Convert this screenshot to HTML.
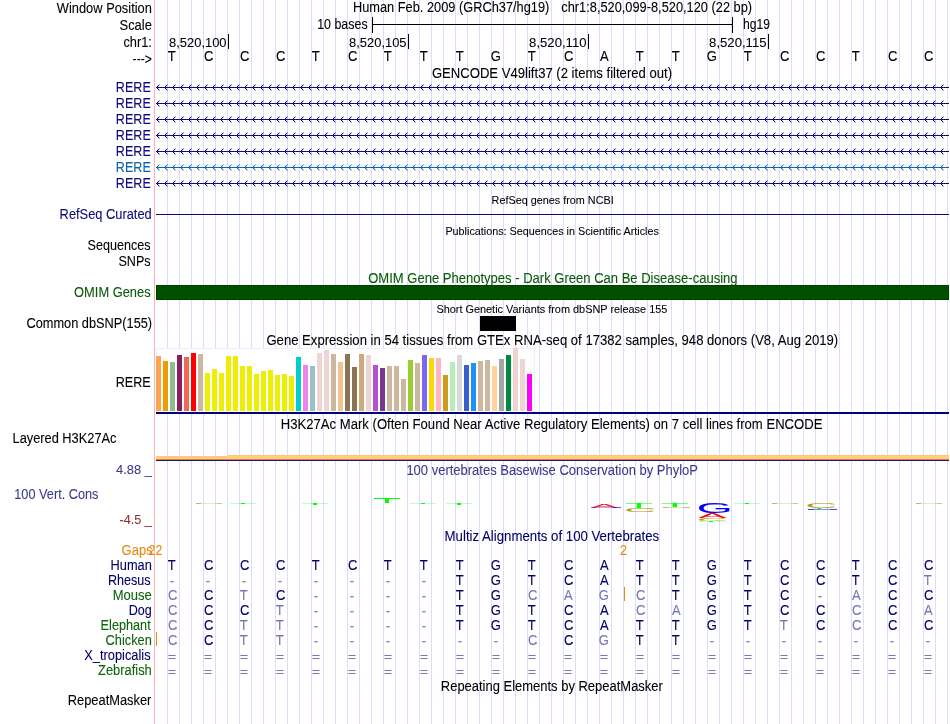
<!DOCTYPE html>
<html lang="en"><head><meta charset="utf-8"><title>UCSC Genome Browser - hg19 chr1:8,520,099-8,520,120</title>
<style>
html,body{margin:0;padding:0;background:#fff;}
body{width:950px;height:724px;overflow:hidden;}
svg{display:block;filter:grayscale(0);font-family:"Liberation Sans",Arial,Helvetica,sans-serif;}
text{white-space:pre;stroke-width:0.08px;}
.c{shape-rendering:crispEdges;}
</style></head><body>
<svg width="950" height="724" viewBox="0 0 950 724">
<rect width="950" height="724" fill="#fff"/>
<g class="c" fill="#dcdcff">
<rect x="167" y="0" width="1" height="724"/>
<rect x="179" y="0" width="1" height="724"/>
<rect x="191" y="0" width="1" height="724"/>
<rect x="203" y="0" width="1" height="724"/>
<rect x="215" y="0" width="1" height="724"/>
<rect x="227" y="0" width="1" height="724"/>
<rect x="239" y="0" width="1" height="724"/>
<rect x="251" y="0" width="1" height="724"/>
<rect x="263" y="0" width="1" height="724"/>
<rect x="275" y="0" width="1" height="724"/>
<rect x="287" y="0" width="1" height="724"/>
<rect x="299" y="0" width="1" height="724"/>
<rect x="311" y="0" width="1" height="724"/>
<rect x="323" y="0" width="1" height="724"/>
<rect x="335" y="0" width="1" height="724"/>
<rect x="347" y="0" width="1" height="724"/>
<rect x="359" y="0" width="1" height="724"/>
<rect x="371" y="0" width="1" height="724"/>
<rect x="383" y="0" width="1" height="724"/>
<rect x="395" y="0" width="1" height="724"/>
<rect x="407" y="0" width="1" height="724"/>
<rect x="419" y="0" width="1" height="724"/>
<rect x="431" y="0" width="1" height="724"/>
<rect x="443" y="0" width="1" height="724"/>
<rect x="455" y="0" width="1" height="724"/>
<rect x="467" y="0" width="1" height="724"/>
<rect x="479" y="0" width="1" height="724"/>
<rect x="491" y="0" width="1" height="724"/>
<rect x="503" y="0" width="1" height="724"/>
<rect x="515" y="0" width="1" height="724"/>
<rect x="527" y="0" width="1" height="724"/>
<rect x="539" y="0" width="1" height="724"/>
<rect x="551" y="0" width="1" height="724"/>
<rect x="563" y="0" width="1" height="724"/>
<rect x="575" y="0" width="1" height="724"/>
<rect x="587" y="0" width="1" height="724"/>
<rect x="599" y="0" width="1" height="724"/>
<rect x="611" y="0" width="1" height="724"/>
<rect x="623" y="0" width="1" height="724"/>
<rect x="635" y="0" width="1" height="724"/>
<rect x="647" y="0" width="1" height="724"/>
<rect x="659" y="0" width="1" height="724"/>
<rect x="671" y="0" width="1" height="724"/>
<rect x="683" y="0" width="1" height="724"/>
<rect x="695" y="0" width="1" height="724"/>
<rect x="707" y="0" width="1" height="724"/>
<rect x="719" y="0" width="1" height="724"/>
<rect x="731" y="0" width="1" height="724"/>
<rect x="743" y="0" width="1" height="724"/>
<rect x="755" y="0" width="1" height="724"/>
<rect x="767" y="0" width="1" height="724"/>
<rect x="779" y="0" width="1" height="724"/>
<rect x="791" y="0" width="1" height="724"/>
<rect x="803" y="0" width="1" height="724"/>
<rect x="815" y="0" width="1" height="724"/>
<rect x="827" y="0" width="1" height="724"/>
<rect x="839" y="0" width="1" height="724"/>
<rect x="851" y="0" width="1" height="724"/>
<rect x="863" y="0" width="1" height="724"/>
<rect x="875" y="0" width="1" height="724"/>
<rect x="887" y="0" width="1" height="724"/>
<rect x="899" y="0" width="1" height="724"/>
<rect x="911" y="0" width="1" height="724"/>
<rect x="923" y="0" width="1" height="724"/>
<rect x="935" y="0" width="1" height="724"/>
<rect x="947" y="0" width="1" height="724"/>
</g>
<rect class="c" x="154" y="0" width="1" height="724" fill="#ffb4b4"/>
<text transform="translate(56.80,13.00) scale(0.9899,1.06)" font-size="13" fill="#000" stroke="#000">Window Position</text>
<text transform="translate(119.50,30.00) scale(0.9972,1.06)" font-size="13" fill="#000" stroke="#000">Scale</text>
<text transform="translate(123.40,47.00) scale(0.9862,1.06)" font-size="13" fill="#000" stroke="#000">chr1:</text>
<text transform="translate(132.60,64.00) scale(0.9356,1.06)" font-size="13" fill="#000" stroke="#000">---&gt;</text>
<text transform="translate(352.91,12.00) scale(0.9853,1.06)" font-size="13" fill="#000" stroke="#000">Human Feb. 2009 (GRCh37/hg19)</text>
<text transform="translate(561.30,12.00) scale(0.9857,1.06)" font-size="13" fill="#000" stroke="#000">chr1:8,520,099-8,520,120 (22 bp)</text>
<g class="c" fill="#000">
<rect x="372" y="24" width="361" height="1"/>
<rect x="372" y="17" width="1" height="16"/>
<rect x="732" y="17" width="1" height="16"/>
<rect x="228" y="34" width="1" height="15"/>
<rect x="408" y="34" width="1" height="15"/>
<rect x="588" y="34" width="1" height="15"/>
<rect x="768" y="34" width="1" height="15"/>
</g>
<text transform="translate(317.20,29.00) scale(0.9557,1.06)" font-size="13" fill="#000" stroke="#000">10 bases</text>
<text transform="translate(742.90,29.00) scale(0.9341,1.06)" font-size="13" fill="#000" stroke="#000">hg19</text>
<text transform="translate(169.10,47.00) scale(0.9930,0.97)" font-size="13" fill="#000" stroke="#000">8,520,100</text>
<text transform="translate(349.10,47.00) scale(0.9930,0.97)" font-size="13" fill="#000" stroke="#000">8,520,105</text>
<text transform="translate(529.10,47.00) scale(1.0099,0.97)" font-size="13" fill="#000" stroke="#000">8,520,110</text>
<text transform="translate(709.10,47.00) scale(1.0099,0.97)" font-size="13" fill="#000" stroke="#000">8,520,115</text>
<text transform="translate(167.83,61.00) scale(1.0000,1.06)" font-size="13" fill="#000" stroke="#000">T</text>
<text transform="translate(203.91,61.00) scale(1.0000,1.06)" font-size="13" fill="#000" stroke="#000">C</text>
<text transform="translate(239.91,61.00) scale(1.0000,1.06)" font-size="13" fill="#000" stroke="#000">C</text>
<text transform="translate(275.91,61.00) scale(1.0000,1.06)" font-size="13" fill="#000" stroke="#000">C</text>
<text transform="translate(311.83,61.00) scale(1.0000,1.06)" font-size="13" fill="#000" stroke="#000">T</text>
<text transform="translate(347.91,61.00) scale(1.0000,1.06)" font-size="13" fill="#000" stroke="#000">C</text>
<text transform="translate(383.83,61.00) scale(1.0000,1.06)" font-size="13" fill="#000" stroke="#000">T</text>
<text transform="translate(419.83,61.00) scale(1.0000,1.06)" font-size="13" fill="#000" stroke="#000">T</text>
<text transform="translate(455.83,61.00) scale(1.0000,1.06)" font-size="13" fill="#000" stroke="#000">T</text>
<text transform="translate(490.84,61.00) scale(1.0000,1.06)" font-size="13" fill="#000" stroke="#000">G</text>
<text transform="translate(527.83,61.00) scale(1.0000,1.06)" font-size="13" fill="#000" stroke="#000">T</text>
<text transform="translate(563.91,61.00) scale(1.0000,1.06)" font-size="13" fill="#000" stroke="#000">C</text>
<text transform="translate(600.06,61.00) scale(1.0000,1.06)" font-size="13" fill="#000" stroke="#000">A</text>
<text transform="translate(635.83,61.00) scale(1.0000,1.06)" font-size="13" fill="#000" stroke="#000">T</text>
<text transform="translate(671.83,61.00) scale(1.0000,1.06)" font-size="13" fill="#000" stroke="#000">T</text>
<text transform="translate(706.84,61.00) scale(1.0000,1.06)" font-size="13" fill="#000" stroke="#000">G</text>
<text transform="translate(743.83,61.00) scale(1.0000,1.06)" font-size="13" fill="#000" stroke="#000">T</text>
<text transform="translate(779.91,61.00) scale(1.0000,1.06)" font-size="13" fill="#000" stroke="#000">C</text>
<text transform="translate(815.91,61.00) scale(1.0000,1.06)" font-size="13" fill="#000" stroke="#000">C</text>
<text transform="translate(851.83,61.00) scale(1.0000,1.06)" font-size="13" fill="#000" stroke="#000">T</text>
<text transform="translate(887.91,61.00) scale(1.0000,1.06)" font-size="13" fill="#000" stroke="#000">C</text>
<text transform="translate(923.91,61.00) scale(1.0000,1.06)" font-size="13" fill="#000" stroke="#000">C</text>
<defs>
<pattern id="cv0" x="157" y="84" width="8" height="16" patternUnits="userSpaceOnUse"><g class="c" fill="#0c0c78">
<rect x="0" y="2" width="1" height="1" opacity="1"/>
<rect x="0" y="4" width="1" height="1" opacity="1"/>
<rect x="1" y="1" width="1" height="1" opacity="0.9"/>
<rect x="1" y="5" width="1" height="1" opacity="0.9"/>
<rect x="2" y="0" width="1" height="1" opacity="0.4"/>
<rect x="2" y="6" width="1" height="1" opacity="0.4"/>
<rect x="1" y="2" width="1" height="1" opacity="0.2"/>
<rect x="1" y="4" width="1" height="1" opacity="0.2"/>
<rect x="0" y="1" width="1" height="1" opacity="0.15"/>
<rect x="0" y="5" width="1" height="1" opacity="0.15"/>
<rect x="2" y="1" width="1" height="1" opacity="0.15"/>
<rect x="2" y="5" width="1" height="1" opacity="0.15"/>
</g></pattern>
<pattern id="cv1" x="157" y="84" width="8" height="16" patternUnits="userSpaceOnUse"><g class="c" fill="#0c64aa">
<rect x="0" y="2" width="1" height="1" opacity="1"/>
<rect x="0" y="4" width="1" height="1" opacity="1"/>
<rect x="1" y="1" width="1" height="1" opacity="0.9"/>
<rect x="1" y="5" width="1" height="1" opacity="0.9"/>
<rect x="2" y="0" width="1" height="1" opacity="0.4"/>
<rect x="2" y="6" width="1" height="1" opacity="0.4"/>
<rect x="1" y="2" width="1" height="1" opacity="0.2"/>
<rect x="1" y="4" width="1" height="1" opacity="0.2"/>
<rect x="0" y="1" width="1" height="1" opacity="0.15"/>
<rect x="0" y="5" width="1" height="1" opacity="0.15"/>
<rect x="2" y="1" width="1" height="1" opacity="0.15"/>
<rect x="2" y="5" width="1" height="1" opacity="0.15"/>
</g></pattern>
</defs>
<text transform="translate(431.90,78.00) scale(1.0076,1.06)" font-size="13" fill="#000" stroke="#000">GENCODE V49lift37 (2 items filtered out)</text>
<text transform="translate(115.83,92.00) scale(0.9676,1.06)" font-size="13" fill="#0c0c78" stroke="#0c0c78">RERE</text>
<rect class="c" x="156" y="87" width="793" height="1" fill="#0c0c78"/>
<rect x="157" y="84" width="787" height="7" fill="url(#cv0)"/>
<text transform="translate(115.83,108.00) scale(0.9676,1.06)" font-size="13" fill="#0c0c78" stroke="#0c0c78">RERE</text>
<rect class="c" x="156" y="103" width="793" height="1" fill="#0c0c78"/>
<rect x="157" y="100" width="787" height="7" fill="url(#cv0)"/>
<text transform="translate(115.83,124.00) scale(0.9676,1.06)" font-size="13" fill="#0c0c78" stroke="#0c0c78">RERE</text>
<rect class="c" x="156" y="119" width="793" height="1" fill="#0c0c78"/>
<rect x="157" y="116" width="787" height="7" fill="url(#cv0)"/>
<text transform="translate(115.83,140.00) scale(0.9676,1.06)" font-size="13" fill="#0c0c78" stroke="#0c0c78">RERE</text>
<rect class="c" x="156" y="135" width="793" height="1" fill="#0c0c78"/>
<rect x="157" y="132" width="787" height="7" fill="url(#cv0)"/>
<text transform="translate(115.83,156.00) scale(0.9676,1.06)" font-size="13" fill="#0c0c78" stroke="#0c0c78">RERE</text>
<rect class="c" x="156" y="151" width="793" height="1" fill="#0c0c78"/>
<rect x="157" y="148" width="787" height="7" fill="url(#cv0)"/>
<text transform="translate(115.83,172.00) scale(0.9676,1.06)" font-size="13" fill="#0c64aa" stroke="#0c64aa">RERE</text>
<rect class="c" x="156" y="167" width="793" height="1" fill="#0c64aa"/>
<rect x="157" y="164" width="787" height="7" fill="url(#cv1)"/>
<text transform="translate(115.83,188.00) scale(0.9676,1.06)" font-size="13" fill="#0c0c78" stroke="#0c0c78">RERE</text>
<rect class="c" x="156" y="183" width="793" height="1" fill="#0c0c78"/>
<rect x="157" y="180" width="787" height="7" fill="url(#cv0)"/>
<text transform="translate(491.60,204.00) scale(0.9851,1.0)" font-size="11" fill="#000" stroke="#000">RefSeq genes from NCBI</text>
<text transform="translate(59.61,219.00) scale(0.9892,1.06)" font-size="13" fill="#0c0c78" stroke="#0c0c78">RefSeq Curated</text>
<rect class="c" x="156" y="214" width="793" height="1" fill="#0c0c78"/>
<text transform="translate(445.40,235.00) scale(0.9818,1.0)" font-size="11" fill="#000" stroke="#000">Publications: Sequences in Scientific Articles</text>
<text transform="translate(87.60,250.00) scale(0.9687,1.06)" font-size="13" fill="#000" stroke="#000">Sequences</text>
<text transform="translate(118.40,266.00) scale(0.9695,1.06)" font-size="13" fill="#000" stroke="#000">SNPs</text>
<text transform="translate(368.20,283.00) scale(1.0028,1.06)" font-size="13" fill="#0a5a0a" stroke="#0a5a0a">OMIM Gene Phenotypes - Dark Green Can Be Disease-causing</text>
<text transform="translate(74.10,297.00) scale(0.9898,1.06)" font-size="13" fill="#0a5a0a" stroke="#0a5a0a">OMIM Genes</text>
<rect class="c" x="156" y="285" width="793" height="15" fill="#004000"/>
<rect class="c" x="157" y="286" width="791" height="13" fill="#005000"/>
<text transform="translate(436.40,313.00) scale(0.9921,1.0)" font-size="11" fill="#000" stroke="#000">Short Genetic Variants from dbSNP release 155</text>
<text transform="translate(26.40,328.00) scale(0.9839,1.06)" font-size="13" fill="#000" stroke="#000">Common dbSNP(155)</text>
<rect class="c" x="480" y="316" width="36" height="15" fill="#000"/>
<text transform="translate(266.40,345.00) scale(1.0093,1.06)" font-size="13" fill="#000" stroke="#000">Gene Expression in 54 tissues from GTEx RNA-seq of 17382 samples, 948 donors (V8, Aug 2019)</text>
<text transform="translate(115.73,387.00) scale(0.9705,1.06)" font-size="13" fill="#000" stroke="#000">RERE</text>
<g class="c">
<rect x="156" y="348" width="379" height="64" fill="#fff"/>
<rect x="156" y="348" width="379" height="1" fill="#f0f0f0"/>
<rect x="534" y="348" width="1" height="64" fill="#f0f0f0"/>
<rect x="156" y="348" width="1" height="64" fill="#f0f0f0"/>
<rect x="156" y="356" width="5" height="55" fill="#FFA54F"/>
<rect x="163" y="361" width="5" height="50" fill="#EE9A00"/>
<rect x="170" y="362" width="5" height="49" fill="#8FBC8F"/>
<rect x="177" y="355" width="5" height="56" fill="#8B1C62"/>
<rect x="184" y="357" width="5" height="54" fill="#EE6A50"/>
<rect x="191" y="353" width="5" height="58" fill="#FF0000"/>
<rect x="198" y="354" width="5" height="57" fill="#CDB79E"/>
<rect x="205" y="373" width="5" height="38" fill="#EEEE00"/>
<rect x="212" y="369" width="5" height="42" fill="#EEEE00"/>
<rect x="219" y="373" width="5" height="38" fill="#EEEE00"/>
<rect x="226" y="356" width="5" height="55" fill="#EEEE00"/>
<rect x="233" y="356" width="5" height="55" fill="#EEEE00"/>
<rect x="240" y="366" width="5" height="45" fill="#EEEE00"/>
<rect x="247" y="366" width="5" height="45" fill="#EEEE00"/>
<rect x="254" y="374" width="5" height="37" fill="#EEEE00"/>
<rect x="261" y="371" width="5" height="40" fill="#EEEE00"/>
<rect x="268" y="370" width="5" height="41" fill="#EEEE00"/>
<rect x="275" y="375" width="5" height="36" fill="#EEEE00"/>
<rect x="282" y="374" width="5" height="37" fill="#EEEE00"/>
<rect x="289" y="376" width="5" height="35" fill="#EEEE00"/>
<rect x="296" y="357" width="5" height="54" fill="#00CDCD"/>
<rect x="303" y="365" width="5" height="46" fill="#EE82EE"/>
<rect x="310" y="366" width="5" height="45" fill="#9AC0CD"/>
<rect x="317" y="353" width="5" height="58" fill="#EED5D2"/>
<rect x="324" y="350" width="5" height="61" fill="#EED5D2"/>
<rect x="331" y="354" width="5" height="57" fill="#CDB79E"/>
<rect x="338" y="362" width="5" height="49" fill="#EEC591"/>
<rect x="345" y="354" width="5" height="57" fill="#8B7355"/>
<rect x="352" y="367" width="5" height="44" fill="#8B7355"/>
<rect x="359" y="354" width="5" height="57" fill="#CDAA7D"/>
<rect x="366" y="355" width="5" height="56" fill="#EED5D2"/>
<rect x="373" y="365" width="5" height="46" fill="#B452CD"/>
<rect x="380" y="368" width="5" height="43" fill="#7A378B"/>
<rect x="387" y="366" width="5" height="45" fill="#CDB79E"/>
<rect x="394" y="366" width="5" height="45" fill="#CDB79E"/>
<rect x="401" y="379" width="5" height="32" fill="#CDB79E"/>
<rect x="408" y="360" width="5" height="51" fill="#9ACD32"/>
<rect x="415" y="363" width="5" height="48" fill="#CDB79E"/>
<rect x="422" y="355" width="5" height="56" fill="#7A67EE"/>
<rect x="429" y="358" width="5" height="53" fill="#FFD700"/>
<rect x="436" y="358" width="5" height="53" fill="#FFB6C1"/>
<rect x="443" y="375" width="5" height="36" fill="#CD9B1D"/>
<rect x="450" y="362" width="5" height="49" fill="#B4EEB4"/>
<rect x="457" y="355" width="5" height="56" fill="#D9D9D9"/>
<rect x="464" y="365" width="5" height="46" fill="#3A5FCD"/>
<rect x="471" y="363" width="5" height="48" fill="#1E90FF"/>
<rect x="478" y="361" width="5" height="50" fill="#CDB79E"/>
<rect x="485" y="360" width="5" height="51" fill="#CDB79E"/>
<rect x="492" y="366" width="5" height="45" fill="#FFD39B"/>
<rect x="499" y="359" width="5" height="52" fill="#A6A6A6"/>
<rect x="506" y="355" width="5" height="56" fill="#008B45"/>
<rect x="513" y="348" width="5" height="63" fill="#EED5D2"/>
<rect x="520" y="359" width="5" height="52" fill="#EED5D2"/>
<rect x="527" y="374" width="5" height="37" fill="#FF00FF"/>
<rect x="156" y="412" width="793" height="2" fill="#00007a"/>
</g>
<text transform="translate(280.79,429.00) scale(1.0086,1.06)" font-size="13" fill="#000" stroke="#000">H3K27Ac Mark (Often Found Near Active Regulatory Elements) on 7 cell lines from ENCODE</text>
<text transform="translate(12.51,443.00) scale(0.9866,1.06)" font-size="13" fill="#000" stroke="#000">Layered H3K27Ac</text>
<g class="c">
<rect x="156" y="456" width="793" height="3" fill="#fdd27a"/>
<rect x="228" y="455" width="721" height="1" fill="#fccb6c"/>
<rect x="156" y="456" width="72" height="1" fill="#fccb6c"/>
<rect x="156" y="459" width="793" height="1" fill="#f8706a"/>
<rect x="156" y="460" width="793" height="1" fill="#18185a"/>
</g>
<text transform="translate(406.40,475.00) scale(1.0005,1.06)" font-size="13" fill="#3c3c8c" stroke="#3c3c8c">100 vertebrates Basewise Conservation by PhyloP</text>
<text transform="translate(116.10,474.00) scale(0.9915,0.97)" font-size="13" fill="#3c3c8c" stroke="#3c3c8c">4.88 _</text>
<text transform="translate(14.30,499.00) scale(0.9792,1.06)" font-size="13" fill="#3c3c8c" stroke="#3c3c8c">100 Vert. Cons</text>
<text transform="translate(119.50,524.00) scale(0.9761,0.97)" font-size="13" fill="#8c3030" stroke="#8c3030">-4.5 _</text>
<rect class="c" x="196" y="503" width="26" height="1" fill="#a8a018" opacity="0.28"/>
<rect class="c" x="196" y="503" width="5" height="1" fill="#a8a018" opacity="0.6"/>
<rect class="c" x="217" y="503" width="5" height="1" fill="#a8a018" opacity="0.4"/>
<rect class="c" x="230" y="503" width="26" height="1" fill="#00ff00" opacity="0.25"/>
<rect class="c" x="241" y="503" width="4" height="1" fill="#00ff00"/>
<rect class="c" x="302" y="503" width="26" height="1" fill="#00ff00" opacity="0.25"/>
<rect class="c" x="313" y="503" width="4" height="2" fill="#00ff00"/>
<rect class="c" x="374" y="498" width="26" height="1" fill="#00ff00" opacity="1"/>
<rect class="c" x="385" y="498" width="4" height="5" fill="#00ff00"/>
<rect class="c" x="410" y="503" width="26" height="1" fill="#00ff00" opacity="0.25"/>
<rect class="c" x="421" y="503" width="4" height="1" fill="#00ff00"/>
<rect class="c" x="446" y="503" width="26" height="1" fill="#00ff00" opacity="0.25"/>
<rect class="c" x="457" y="503" width="4" height="2" fill="#00ff00"/>
<rect class="c" x="734" y="503" width="26" height="1" fill="#00ff00" opacity="0.25"/>
<rect class="c" x="745" y="503" width="4" height="1" fill="#00ff00"/>
<rect class="c" x="772" y="503" width="26" height="1" fill="#a8a018" opacity="0.28"/>
<rect class="c" x="772" y="503" width="5" height="1" fill="#a8a018" opacity="0.6"/>
<rect class="c" x="793" y="503" width="5" height="1" fill="#a8a018" opacity="0.4"/>
<rect class="c" x="916" y="503" width="26" height="1" fill="#a8a018" opacity="0.28"/>
<rect class="c" x="916" y="503" width="5" height="1" fill="#a8a018" opacity="0.6"/>
<rect class="c" x="937" y="503" width="5" height="1" fill="#a8a018" opacity="0.4"/>
<text transform="translate(590.60,507.50) scale(2.069,0.293)" font-size="20.0" fill="#ff0000" stroke="#ff0000" stroke-width="0" y="0">A</text>
<rect class="c" x="591" y="507" width="30" height="1" fill="#0000ff" opacity="0.3"/>
<rect class="c" x="614" y="507" width="7" height="1" fill="#0000ff" opacity="0.5"/>
<text transform="translate(625.09,507.60) scale(2.281,0.321)" font-size="20.0" fill="#00ff00" stroke="#00ff00" stroke-width="0" y="0">T</text>
<text transform="translate(624.18,507.60) scale(2.219,-0.224)" font-size="20.0" fill="#a8a018" stroke="#a8a018" stroke-width="0.5" y="0.24">C</text>
<text transform="translate(661.09,507.20) scale(2.281,0.293)" font-size="20.0" fill="#00ff00" stroke="#00ff00" stroke-width="0" y="0">T</text>
<rect class="c" x="663" y="507" width="27" height="1" fill="#a8a018" opacity="0.3"/>
<rect class="c" x="663" y="507" width="6" height="1" fill="#a8a018" opacity="0.6"/>
<rect class="c" x="684" y="507" width="6" height="1" fill="#a8a018" opacity="0.5"/>
<text transform="translate(696.69,513.10) scale(2.309,0.705)" font-size="20.0" fill="#0000ff" stroke="#0000ff" stroke-width="0" y="-0.24">G</text>
<text transform="translate(698.20,518.20) scale(2.114,0.363)" font-size="20.0" fill="#ff0000" stroke="#ff0000" stroke-width="0" y="0">A</text>
<text transform="translate(696.83,518.30) scale(2.172,-0.190)" font-size="20.0" fill="#a8a018" stroke="#a8a018" stroke-width="0.4" y="0.24">C</text>
<rect class="c" x="698" y="521" width="29" height="1" fill="#00ff00" opacity="0.2"/>
<rect class="c" x="709" y="521" width="4" height="1" fill="#00ff00"/>
<text transform="translate(805.18,508.00) scale(2.219,0.386)" font-size="20.0" fill="#a8a018" stroke="#a8a018" stroke-width="0.5" y="-0.24">C</text>
<rect class="c" x="817" y="508" width="4" height="1" fill="#00ff00"/>
<rect class="c" x="806" y="508" width="30" height="1" fill="#00ff00" opacity="0.12"/>
<rect class="c" x="808" y="509" width="29" height="1" fill="#0000ff" opacity="0.45"/>
<rect class="c" x="808" y="509" width="6" height="1" fill="#0000ff" opacity="0.5"/>
<rect class="c" x="830" y="509" width="7" height="1" fill="#0000ff" opacity="0.5"/>
<text transform="translate(444.58,541.00) scale(1.0170,1.06)" font-size="13" fill="#000066" stroke="#000066">Multiz Alignments of 100 Vertebrates</text>
<text transform="translate(121.60,555.00) scale(1.0000,1.06)" font-size="13" fill="#e68a14" stroke="#e68a14">Gaps</text>
<text transform="translate(148.60,555.00) scale(0.9417,1.06)" font-size="13" fill="#e68a14" stroke="#e68a14">22</text>
<text transform="translate(620.00,555.00) scale(0.9714,1.06)" font-size="13" fill="#e68a14" stroke="#e68a14">2</text>
<text transform="translate(110.51,570.00) scale(0.9858,1.06)" font-size="13" fill="#000066" stroke="#000066">Human</text>
<text transform="translate(167.83,570.00) scale(1.0000,1.06)" font-size="13" fill="#000066" stroke="#000066">T</text>
<text transform="translate(203.91,570.00) scale(1.0000,1.06)" font-size="13" fill="#000066" stroke="#000066">C</text>
<text transform="translate(239.91,570.00) scale(1.0000,1.06)" font-size="13" fill="#000066" stroke="#000066">C</text>
<text transform="translate(275.91,570.00) scale(1.0000,1.06)" font-size="13" fill="#000066" stroke="#000066">C</text>
<text transform="translate(311.83,570.00) scale(1.0000,1.06)" font-size="13" fill="#000066" stroke="#000066">T</text>
<text transform="translate(347.91,570.00) scale(1.0000,1.06)" font-size="13" fill="#000066" stroke="#000066">C</text>
<text transform="translate(383.83,570.00) scale(1.0000,1.06)" font-size="13" fill="#000066" stroke="#000066">T</text>
<text transform="translate(419.83,570.00) scale(1.0000,1.06)" font-size="13" fill="#000066" stroke="#000066">T</text>
<text transform="translate(455.83,570.00) scale(1.0000,1.06)" font-size="13" fill="#000066" stroke="#000066">T</text>
<text transform="translate(490.84,570.00) scale(1.0000,1.06)" font-size="13" fill="#000066" stroke="#000066">G</text>
<text transform="translate(527.83,570.00) scale(1.0000,1.06)" font-size="13" fill="#000066" stroke="#000066">T</text>
<text transform="translate(563.91,570.00) scale(1.0000,1.06)" font-size="13" fill="#000066" stroke="#000066">C</text>
<text transform="translate(600.06,570.00) scale(1.0000,1.06)" font-size="13" fill="#000066" stroke="#000066">A</text>
<text transform="translate(635.83,570.00) scale(1.0000,1.06)" font-size="13" fill="#000066" stroke="#000066">T</text>
<text transform="translate(671.83,570.00) scale(1.0000,1.06)" font-size="13" fill="#000066" stroke="#000066">T</text>
<text transform="translate(706.84,570.00) scale(1.0000,1.06)" font-size="13" fill="#000066" stroke="#000066">G</text>
<text transform="translate(743.83,570.00) scale(1.0000,1.06)" font-size="13" fill="#000066" stroke="#000066">T</text>
<text transform="translate(779.91,570.00) scale(1.0000,1.06)" font-size="13" fill="#000066" stroke="#000066">C</text>
<text transform="translate(815.91,570.00) scale(1.0000,1.06)" font-size="13" fill="#000066" stroke="#000066">C</text>
<text transform="translate(851.83,570.00) scale(1.0000,1.06)" font-size="13" fill="#000066" stroke="#000066">T</text>
<text transform="translate(887.91,570.00) scale(1.0000,1.06)" font-size="13" fill="#000066" stroke="#000066">C</text>
<text transform="translate(923.91,570.00) scale(1.0000,1.06)" font-size="13" fill="#000066" stroke="#000066">C</text>
<text transform="translate(108.03,585.00) scale(0.9661,1.06)" font-size="13" fill="#000066" stroke="#000066">Rhesus</text>
<text transform="translate(169.79,585.00) scale(1.0000,1.0)" font-size="13" fill="#7878b0" stroke="#7878b0">-</text>
<text transform="translate(205.79,585.00) scale(1.0000,1.0)" font-size="13" fill="#7878b0" stroke="#7878b0">-</text>
<text transform="translate(241.79,585.00) scale(1.0000,1.0)" font-size="13" fill="#7878b0" stroke="#7878b0">-</text>
<text transform="translate(277.79,585.00) scale(1.0000,1.0)" font-size="13" fill="#7878b0" stroke="#7878b0">-</text>
<text transform="translate(313.79,585.00) scale(1.0000,1.0)" font-size="13" fill="#7878b0" stroke="#7878b0">-</text>
<text transform="translate(349.79,585.00) scale(1.0000,1.0)" font-size="13" fill="#7878b0" stroke="#7878b0">-</text>
<text transform="translate(385.79,585.00) scale(1.0000,1.0)" font-size="13" fill="#7878b0" stroke="#7878b0">-</text>
<text transform="translate(421.79,585.00) scale(1.0000,1.0)" font-size="13" fill="#7878b0" stroke="#7878b0">-</text>
<text transform="translate(455.83,585.00) scale(1.0000,1.06)" font-size="13" fill="#000066" stroke="#000066">T</text>
<text transform="translate(490.84,585.00) scale(1.0000,1.06)" font-size="13" fill="#000066" stroke="#000066">G</text>
<text transform="translate(527.83,585.00) scale(1.0000,1.06)" font-size="13" fill="#000066" stroke="#000066">T</text>
<text transform="translate(563.91,585.00) scale(1.0000,1.06)" font-size="13" fill="#000066" stroke="#000066">C</text>
<text transform="translate(600.06,585.00) scale(1.0000,1.06)" font-size="13" fill="#000066" stroke="#000066">A</text>
<text transform="translate(635.83,585.00) scale(1.0000,1.06)" font-size="13" fill="#000066" stroke="#000066">T</text>
<text transform="translate(671.83,585.00) scale(1.0000,1.06)" font-size="13" fill="#000066" stroke="#000066">T</text>
<text transform="translate(706.84,585.00) scale(1.0000,1.06)" font-size="13" fill="#000066" stroke="#000066">G</text>
<text transform="translate(743.83,585.00) scale(1.0000,1.06)" font-size="13" fill="#000066" stroke="#000066">T</text>
<text transform="translate(779.91,585.00) scale(1.0000,1.06)" font-size="13" fill="#000066" stroke="#000066">C</text>
<text transform="translate(815.91,585.00) scale(1.0000,1.06)" font-size="13" fill="#000066" stroke="#000066">C</text>
<text transform="translate(851.83,585.00) scale(1.0000,1.06)" font-size="13" fill="#000066" stroke="#000066">T</text>
<text transform="translate(887.91,585.00) scale(1.0000,1.06)" font-size="13" fill="#000066" stroke="#000066">C</text>
<text transform="translate(923.83,585.00) scale(1.0000,1.06)" font-size="13" fill="#7878b0" stroke="#7878b0">T</text>
<text transform="translate(112.70,600.00) scale(1.0029,1.06)" font-size="13" fill="#0c640c" stroke="#0c640c">Mouse</text>
<text transform="translate(167.91,600.00) scale(1.0000,1.06)" font-size="13" fill="#7878b0" stroke="#7878b0">C</text>
<text transform="translate(203.91,600.00) scale(1.0000,1.06)" font-size="13" fill="#000066" stroke="#000066">C</text>
<text transform="translate(239.83,600.00) scale(1.0000,1.06)" font-size="13" fill="#7878b0" stroke="#7878b0">T</text>
<text transform="translate(275.91,600.00) scale(1.0000,1.06)" font-size="13" fill="#000066" stroke="#000066">C</text>
<text transform="translate(313.79,600.00) scale(1.0000,1.0)" font-size="13" fill="#7878b0" stroke="#7878b0">-</text>
<text transform="translate(349.79,600.00) scale(1.0000,1.0)" font-size="13" fill="#7878b0" stroke="#7878b0">-</text>
<text transform="translate(385.79,600.00) scale(1.0000,1.0)" font-size="13" fill="#7878b0" stroke="#7878b0">-</text>
<text transform="translate(421.79,600.00) scale(1.0000,1.0)" font-size="13" fill="#7878b0" stroke="#7878b0">-</text>
<text transform="translate(455.83,600.00) scale(1.0000,1.06)" font-size="13" fill="#000066" stroke="#000066">T</text>
<text transform="translate(490.84,600.00) scale(1.0000,1.06)" font-size="13" fill="#000066" stroke="#000066">G</text>
<text transform="translate(527.91,600.00) scale(1.0000,1.06)" font-size="13" fill="#7878b0" stroke="#7878b0">C</text>
<text transform="translate(564.06,600.00) scale(1.0000,1.06)" font-size="13" fill="#7878b0" stroke="#7878b0">A</text>
<text transform="translate(598.84,600.00) scale(1.0000,1.06)" font-size="13" fill="#7878b0" stroke="#7878b0">G</text>
<text transform="translate(635.91,600.00) scale(1.0000,1.06)" font-size="13" fill="#7878b0" stroke="#7878b0">C</text>
<text transform="translate(671.83,600.00) scale(1.0000,1.06)" font-size="13" fill="#000066" stroke="#000066">T</text>
<text transform="translate(706.84,600.00) scale(1.0000,1.06)" font-size="13" fill="#000066" stroke="#000066">G</text>
<text transform="translate(743.83,600.00) scale(1.0000,1.06)" font-size="13" fill="#000066" stroke="#000066">T</text>
<text transform="translate(779.91,600.00) scale(1.0000,1.06)" font-size="13" fill="#000066" stroke="#000066">C</text>
<text transform="translate(817.79,600.00) scale(1.0000,1.0)" font-size="13" fill="#7878b0" stroke="#7878b0">-</text>
<text transform="translate(852.06,600.00) scale(1.0000,1.06)" font-size="13" fill="#7878b0" stroke="#7878b0">A</text>
<text transform="translate(887.91,600.00) scale(1.0000,1.06)" font-size="13" fill="#000066" stroke="#000066">C</text>
<text transform="translate(923.91,600.00) scale(1.0000,1.06)" font-size="13" fill="#000066" stroke="#000066">C</text>
<text transform="translate(128.73,615.00) scale(0.9682,1.06)" font-size="13" fill="#000066" stroke="#000066">Dog</text>
<text transform="translate(167.91,615.00) scale(1.0000,1.06)" font-size="13" fill="#7878b0" stroke="#7878b0">C</text>
<text transform="translate(203.91,615.00) scale(1.0000,1.06)" font-size="13" fill="#000066" stroke="#000066">C</text>
<text transform="translate(239.91,615.00) scale(1.0000,1.06)" font-size="13" fill="#000066" stroke="#000066">C</text>
<text transform="translate(275.83,615.00) scale(1.0000,1.06)" font-size="13" fill="#7878b0" stroke="#7878b0">T</text>
<text transform="translate(313.79,615.00) scale(1.0000,1.0)" font-size="13" fill="#7878b0" stroke="#7878b0">-</text>
<text transform="translate(349.79,615.00) scale(1.0000,1.0)" font-size="13" fill="#7878b0" stroke="#7878b0">-</text>
<text transform="translate(385.79,615.00) scale(1.0000,1.0)" font-size="13" fill="#7878b0" stroke="#7878b0">-</text>
<text transform="translate(421.79,615.00) scale(1.0000,1.0)" font-size="13" fill="#7878b0" stroke="#7878b0">-</text>
<text transform="translate(455.83,615.00) scale(1.0000,1.06)" font-size="13" fill="#000066" stroke="#000066">T</text>
<text transform="translate(490.84,615.00) scale(1.0000,1.06)" font-size="13" fill="#000066" stroke="#000066">G</text>
<text transform="translate(527.83,615.00) scale(1.0000,1.06)" font-size="13" fill="#000066" stroke="#000066">T</text>
<text transform="translate(563.91,615.00) scale(1.0000,1.06)" font-size="13" fill="#000066" stroke="#000066">C</text>
<text transform="translate(600.06,615.00) scale(1.0000,1.06)" font-size="13" fill="#000066" stroke="#000066">A</text>
<text transform="translate(635.91,615.00) scale(1.0000,1.06)" font-size="13" fill="#7878b0" stroke="#7878b0">C</text>
<text transform="translate(672.06,615.00) scale(1.0000,1.06)" font-size="13" fill="#7878b0" stroke="#7878b0">A</text>
<text transform="translate(706.84,615.00) scale(1.0000,1.06)" font-size="13" fill="#000066" stroke="#000066">G</text>
<text transform="translate(743.83,615.00) scale(1.0000,1.06)" font-size="13" fill="#000066" stroke="#000066">T</text>
<text transform="translate(779.91,615.00) scale(1.0000,1.06)" font-size="13" fill="#000066" stroke="#000066">C</text>
<text transform="translate(815.91,615.00) scale(1.0000,1.06)" font-size="13" fill="#000066" stroke="#000066">C</text>
<text transform="translate(851.91,615.00) scale(1.0000,1.06)" font-size="13" fill="#7878b0" stroke="#7878b0">C</text>
<text transform="translate(887.91,615.00) scale(1.0000,1.06)" font-size="13" fill="#000066" stroke="#000066">C</text>
<text transform="translate(924.06,615.00) scale(1.0000,1.06)" font-size="13" fill="#7878b0" stroke="#7878b0">A</text>
<text transform="translate(100.62,630.00) scale(0.9762,1.06)" font-size="13" fill="#0c640c" stroke="#0c640c">Elephant</text>
<text transform="translate(167.91,630.00) scale(1.0000,1.06)" font-size="13" fill="#7878b0" stroke="#7878b0">C</text>
<text transform="translate(203.91,630.00) scale(1.0000,1.06)" font-size="13" fill="#000066" stroke="#000066">C</text>
<text transform="translate(239.83,630.00) scale(1.0000,1.06)" font-size="13" fill="#7878b0" stroke="#7878b0">T</text>
<text transform="translate(275.83,630.00) scale(1.0000,1.06)" font-size="13" fill="#7878b0" stroke="#7878b0">T</text>
<text transform="translate(313.79,630.00) scale(1.0000,1.0)" font-size="13" fill="#7878b0" stroke="#7878b0">-</text>
<text transform="translate(349.79,630.00) scale(1.0000,1.0)" font-size="13" fill="#7878b0" stroke="#7878b0">-</text>
<text transform="translate(385.79,630.00) scale(1.0000,1.0)" font-size="13" fill="#7878b0" stroke="#7878b0">-</text>
<text transform="translate(421.79,630.00) scale(1.0000,1.0)" font-size="13" fill="#7878b0" stroke="#7878b0">-</text>
<text transform="translate(455.83,630.00) scale(1.0000,1.06)" font-size="13" fill="#000066" stroke="#000066">T</text>
<text transform="translate(490.84,630.00) scale(1.0000,1.06)" font-size="13" fill="#000066" stroke="#000066">G</text>
<text transform="translate(527.83,630.00) scale(1.0000,1.06)" font-size="13" fill="#000066" stroke="#000066">T</text>
<text transform="translate(563.91,630.00) scale(1.0000,1.06)" font-size="13" fill="#000066" stroke="#000066">C</text>
<text transform="translate(600.06,630.00) scale(1.0000,1.06)" font-size="13" fill="#000066" stroke="#000066">A</text>
<text transform="translate(635.83,630.00) scale(1.0000,1.06)" font-size="13" fill="#000066" stroke="#000066">T</text>
<text transform="translate(671.83,630.00) scale(1.0000,1.06)" font-size="13" fill="#000066" stroke="#000066">T</text>
<text transform="translate(706.84,630.00) scale(1.0000,1.06)" font-size="13" fill="#000066" stroke="#000066">G</text>
<text transform="translate(743.83,630.00) scale(1.0000,1.06)" font-size="13" fill="#000066" stroke="#000066">T</text>
<text transform="translate(779.83,630.00) scale(1.0000,1.06)" font-size="13" fill="#7878b0" stroke="#7878b0">T</text>
<text transform="translate(815.91,630.00) scale(1.0000,1.06)" font-size="13" fill="#000066" stroke="#000066">C</text>
<text transform="translate(851.91,630.00) scale(1.0000,1.06)" font-size="13" fill="#7878b0" stroke="#7878b0">C</text>
<text transform="translate(887.91,630.00) scale(1.0000,1.06)" font-size="13" fill="#000066" stroke="#000066">C</text>
<text transform="translate(923.91,630.00) scale(1.0000,1.06)" font-size="13" fill="#000066" stroke="#000066">C</text>
<text transform="translate(105.60,645.00) scale(0.9842,1.06)" font-size="13" fill="#0c640c" stroke="#0c640c">Chicken</text>
<text transform="translate(167.91,645.00) scale(1.0000,1.06)" font-size="13" fill="#7878b0" stroke="#7878b0">C</text>
<text transform="translate(203.91,645.00) scale(1.0000,1.06)" font-size="13" fill="#000066" stroke="#000066">C</text>
<text transform="translate(239.83,645.00) scale(1.0000,1.06)" font-size="13" fill="#7878b0" stroke="#7878b0">T</text>
<text transform="translate(275.83,645.00) scale(1.0000,1.06)" font-size="13" fill="#7878b0" stroke="#7878b0">T</text>
<text transform="translate(313.79,645.00) scale(1.0000,1.0)" font-size="13" fill="#7878b0" stroke="#7878b0">-</text>
<text transform="translate(349.79,645.00) scale(1.0000,1.0)" font-size="13" fill="#7878b0" stroke="#7878b0">-</text>
<text transform="translate(385.79,645.00) scale(1.0000,1.0)" font-size="13" fill="#7878b0" stroke="#7878b0">-</text>
<text transform="translate(421.79,645.00) scale(1.0000,1.0)" font-size="13" fill="#7878b0" stroke="#7878b0">-</text>
<text transform="translate(457.79,645.00) scale(1.0000,1.0)" font-size="13" fill="#7878b0" stroke="#7878b0">-</text>
<text transform="translate(493.79,645.00) scale(1.0000,1.0)" font-size="13" fill="#7878b0" stroke="#7878b0">-</text>
<text transform="translate(527.91,645.00) scale(1.0000,1.06)" font-size="13" fill="#7878b0" stroke="#7878b0">C</text>
<text transform="translate(563.91,645.00) scale(1.0000,1.06)" font-size="13" fill="#000066" stroke="#000066">C</text>
<text transform="translate(598.84,645.00) scale(1.0000,1.06)" font-size="13" fill="#7878b0" stroke="#7878b0">G</text>
<text transform="translate(635.83,645.00) scale(1.0000,1.06)" font-size="13" fill="#000066" stroke="#000066">T</text>
<text transform="translate(671.83,645.00) scale(1.0000,1.06)" font-size="13" fill="#000066" stroke="#000066">T</text>
<text transform="translate(709.79,645.00) scale(1.0000,1.0)" font-size="13" fill="#7878b0" stroke="#7878b0">-</text>
<text transform="translate(745.79,645.00) scale(1.0000,1.0)" font-size="13" fill="#7878b0" stroke="#7878b0">-</text>
<text transform="translate(781.79,645.00) scale(1.0000,1.0)" font-size="13" fill="#7878b0" stroke="#7878b0">-</text>
<text transform="translate(817.79,645.00) scale(1.0000,1.0)" font-size="13" fill="#7878b0" stroke="#7878b0">-</text>
<text transform="translate(853.79,645.00) scale(1.0000,1.0)" font-size="13" fill="#7878b0" stroke="#7878b0">-</text>
<text transform="translate(889.79,645.00) scale(1.0000,1.0)" font-size="13" fill="#7878b0" stroke="#7878b0">-</text>
<text transform="translate(925.79,645.00) scale(1.0000,1.0)" font-size="13" fill="#7878b0" stroke="#7878b0">-</text>
<text transform="translate(84.20,660.00) scale(0.9882,1.06)" font-size="13" fill="#000066" stroke="#000066">X_tropicalis</text>
<text transform="translate(167.67,661.00) scale(1.1000,1.0)" font-size="13" fill="#7878b0" stroke="#7878b0">=</text>
<text transform="translate(203.67,661.00) scale(1.1000,1.0)" font-size="13" fill="#7878b0" stroke="#7878b0">=</text>
<text transform="translate(239.67,661.00) scale(1.1000,1.0)" font-size="13" fill="#7878b0" stroke="#7878b0">=</text>
<text transform="translate(275.67,661.00) scale(1.1000,1.0)" font-size="13" fill="#7878b0" stroke="#7878b0">=</text>
<text transform="translate(311.67,661.00) scale(1.1000,1.0)" font-size="13" fill="#7878b0" stroke="#7878b0">=</text>
<text transform="translate(347.67,661.00) scale(1.1000,1.0)" font-size="13" fill="#7878b0" stroke="#7878b0">=</text>
<text transform="translate(383.67,661.00) scale(1.1000,1.0)" font-size="13" fill="#7878b0" stroke="#7878b0">=</text>
<text transform="translate(419.67,661.00) scale(1.1000,1.0)" font-size="13" fill="#7878b0" stroke="#7878b0">=</text>
<text transform="translate(455.67,661.00) scale(1.1000,1.0)" font-size="13" fill="#7878b0" stroke="#7878b0">=</text>
<text transform="translate(491.67,661.00) scale(1.1000,1.0)" font-size="13" fill="#7878b0" stroke="#7878b0">=</text>
<text transform="translate(527.67,661.00) scale(1.1000,1.0)" font-size="13" fill="#7878b0" stroke="#7878b0">=</text>
<text transform="translate(563.67,661.00) scale(1.1000,1.0)" font-size="13" fill="#7878b0" stroke="#7878b0">=</text>
<text transform="translate(599.67,661.00) scale(1.1000,1.0)" font-size="13" fill="#7878b0" stroke="#7878b0">=</text>
<text transform="translate(635.67,661.00) scale(1.1000,1.0)" font-size="13" fill="#7878b0" stroke="#7878b0">=</text>
<text transform="translate(671.67,661.00) scale(1.1000,1.0)" font-size="13" fill="#7878b0" stroke="#7878b0">=</text>
<text transform="translate(707.67,661.00) scale(1.1000,1.0)" font-size="13" fill="#7878b0" stroke="#7878b0">=</text>
<text transform="translate(743.67,661.00) scale(1.1000,1.0)" font-size="13" fill="#7878b0" stroke="#7878b0">=</text>
<text transform="translate(779.67,661.00) scale(1.1000,1.0)" font-size="13" fill="#7878b0" stroke="#7878b0">=</text>
<text transform="translate(815.67,661.00) scale(1.1000,1.0)" font-size="13" fill="#7878b0" stroke="#7878b0">=</text>
<text transform="translate(851.67,661.00) scale(1.1000,1.0)" font-size="13" fill="#7878b0" stroke="#7878b0">=</text>
<text transform="translate(887.67,661.00) scale(1.1000,1.0)" font-size="13" fill="#7878b0" stroke="#7878b0">=</text>
<text transform="translate(923.67,661.00) scale(1.1000,1.0)" font-size="13" fill="#7878b0" stroke="#7878b0">=</text>
<text transform="translate(98.00,675.00) scale(0.9933,1.06)" font-size="13" fill="#0c640c" stroke="#0c640c">Zebrafish</text>
<text transform="translate(167.67,676.00) scale(1.1000,1.0)" font-size="13" fill="#7878b0" stroke="#7878b0">=</text>
<text transform="translate(203.67,676.00) scale(1.1000,1.0)" font-size="13" fill="#7878b0" stroke="#7878b0">=</text>
<text transform="translate(239.67,676.00) scale(1.1000,1.0)" font-size="13" fill="#7878b0" stroke="#7878b0">=</text>
<text transform="translate(275.67,676.00) scale(1.1000,1.0)" font-size="13" fill="#7878b0" stroke="#7878b0">=</text>
<text transform="translate(311.67,676.00) scale(1.1000,1.0)" font-size="13" fill="#7878b0" stroke="#7878b0">=</text>
<text transform="translate(347.67,676.00) scale(1.1000,1.0)" font-size="13" fill="#7878b0" stroke="#7878b0">=</text>
<text transform="translate(383.67,676.00) scale(1.1000,1.0)" font-size="13" fill="#7878b0" stroke="#7878b0">=</text>
<text transform="translate(419.67,676.00) scale(1.1000,1.0)" font-size="13" fill="#7878b0" stroke="#7878b0">=</text>
<text transform="translate(455.67,676.00) scale(1.1000,1.0)" font-size="13" fill="#7878b0" stroke="#7878b0">=</text>
<text transform="translate(491.67,676.00) scale(1.1000,1.0)" font-size="13" fill="#7878b0" stroke="#7878b0">=</text>
<text transform="translate(527.67,676.00) scale(1.1000,1.0)" font-size="13" fill="#7878b0" stroke="#7878b0">=</text>
<text transform="translate(563.67,676.00) scale(1.1000,1.0)" font-size="13" fill="#7878b0" stroke="#7878b0">=</text>
<text transform="translate(599.67,676.00) scale(1.1000,1.0)" font-size="13" fill="#7878b0" stroke="#7878b0">=</text>
<text transform="translate(635.67,676.00) scale(1.1000,1.0)" font-size="13" fill="#7878b0" stroke="#7878b0">=</text>
<text transform="translate(671.67,676.00) scale(1.1000,1.0)" font-size="13" fill="#7878b0" stroke="#7878b0">=</text>
<text transform="translate(707.67,676.00) scale(1.1000,1.0)" font-size="13" fill="#7878b0" stroke="#7878b0">=</text>
<text transform="translate(743.67,676.00) scale(1.1000,1.0)" font-size="13" fill="#7878b0" stroke="#7878b0">=</text>
<text transform="translate(779.67,676.00) scale(1.1000,1.0)" font-size="13" fill="#7878b0" stroke="#7878b0">=</text>
<text transform="translate(815.67,676.00) scale(1.1000,1.0)" font-size="13" fill="#7878b0" stroke="#7878b0">=</text>
<text transform="translate(851.67,676.00) scale(1.1000,1.0)" font-size="13" fill="#7878b0" stroke="#7878b0">=</text>
<text transform="translate(887.67,676.00) scale(1.1000,1.0)" font-size="13" fill="#7878b0" stroke="#7878b0">=</text>
<text transform="translate(923.67,676.00) scale(1.1000,1.0)" font-size="13" fill="#7878b0" stroke="#7878b0">=</text>
<rect class="c" x="624" y="587" width="1" height="14" fill="#e68a14"/>
<rect class="c" x="156" y="632" width="1" height="14" fill="#e68a14"/>
<text transform="translate(440.80,691.00) scale(0.9985,1.06)" font-size="13" fill="#000" stroke="#000">Repeating Elements by RepeatMasker</text>
<text transform="translate(67.71,705.00) scale(0.9904,1.06)" font-size="13" fill="#000" stroke="#000">RepeatMasker</text>
</svg></body></html>
